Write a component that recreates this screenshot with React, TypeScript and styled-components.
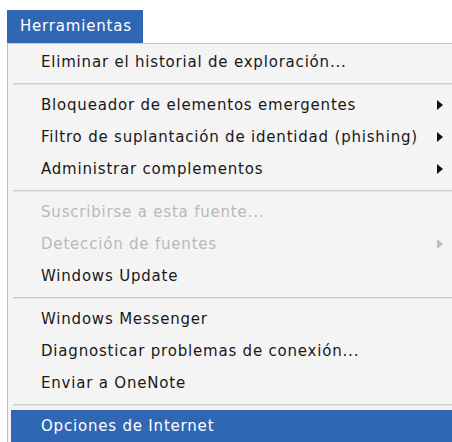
import styled, { createGlobalStyle } from "styled-components";

const GlobalStyle = createGlobalStyle`
    html, body {
        margin: 0;
        padding: 0;
        background: #ffffff;
        overflow: hidden;
    }
`;

const Page = styled.div`
    width: 452px;
    height: 442px;
    padding: 10px 0 0 7px;
    box-sizing: border-box;
    display: flex;
    flex-direction: column;
    font-family: "DejaVu Sans", "Liberation Sans", sans-serif;
    font-size: 15px;
    letter-spacing: 0.8px;
    overflow: hidden;
`;

const MenuTitle = styled.div`
    width: 136px;
    height: 33px;
    box-sizing: border-box;
    padding-left: 13px;
    line-height: 33px;
    background: #3067b5;
    color: #ffffff;
`;

const MenuPanel = styled.div`
    flex: 1;
    display: flex;
    flex-direction: column;
    padding: 2px 0 0 3px;
    background: #f4f4f4;
    border-top: 1px solid #c9c9c9;
    border-left: 1px solid #c2c2c2;
`;

type ItemProps = {
    $disabled?: boolean,
    $active?: boolean,
}

const Item = styled.div<ItemProps>`
    height: 32px;
    flex-shrink: 0;
    display: flex;
    align-items: center;
    padding: 0 9px 0 30px;
    background: ${({ $active }) => $active ? '#3067b5' : 'transparent'};
    color: ${({ $active, $disabled }) => $active ? '#ffffff' : $disabled ? '#b9b9b9' : '#181818'};

    .label {
        flex: 1;
        white-space: nowrap;
    }
`;

const Separator = styled.div`
    height: 11px;
    flex-shrink: 0;
    margin-left: 2px;
    display: flex;
    flex-direction: column;
    justify-content: center;

    &::before {
        content: "";
        height: 1px;
        background: #cdcdcd;
        border-bottom: 1px solid #e6e6e6;
    }
`;

const Arrow = ({ color }: { color: string }) => (
    <svg width="6" height="10" viewBox="0 0 6 10">
        <path d="M0 0 L6 5 L0 10 Z" fill={color} />
    </svg>
);

type Entry = {
    label: string,
    submenu?: boolean,
    disabled?: boolean,
    active?: boolean,
}

const groups: Entry[][] = [
    [
        { label: "Eliminar el historial de exploración..." },
    ],
    [
        { label: "Bloqueador de elementos emergentes", submenu: true },
        { label: "Filtro de suplantación de identidad (phishing)", submenu: true },
        { label: "Administrar complementos", submenu: true },
    ],
    [
        { label: "Suscribirse a esta fuente...", disabled: true },
        { label: "Detección de fuentes", submenu: true, disabled: true },
        { label: "Windows Update" },
    ],
    [
        { label: "Windows Messenger" },
        { label: "Diagnosticar problemas de conexión..." },
        { label: "Enviar a OneNote" },
    ],
    [
        { label: "Opciones de Internet", active: true },
    ],
];

const App = () => {
    return (
        <>
            <GlobalStyle />
            <Page>
                <MenuTitle>Herramientas</MenuTitle>
                <MenuPanel>
                    {groups.map((group, gi) => (
                        <div key={gi} style={{ display: 'contents' }}>
                            {gi > 0 && <Separator />}
                            {group.map((entry) => (
                                <Item key={entry.label} $disabled={entry.disabled} $active={entry.active}>
                                    <span className="label">{entry.label}</span>
                                    {entry.submenu && (
                                        <Arrow color={entry.disabled ? '#bcbcbc' : '#111111'} />
                                    )}
                                </Item>
                            ))}
                        </div>
                    ))}
                </MenuPanel>
            </Page>
        </>
    );
};

export default App;
